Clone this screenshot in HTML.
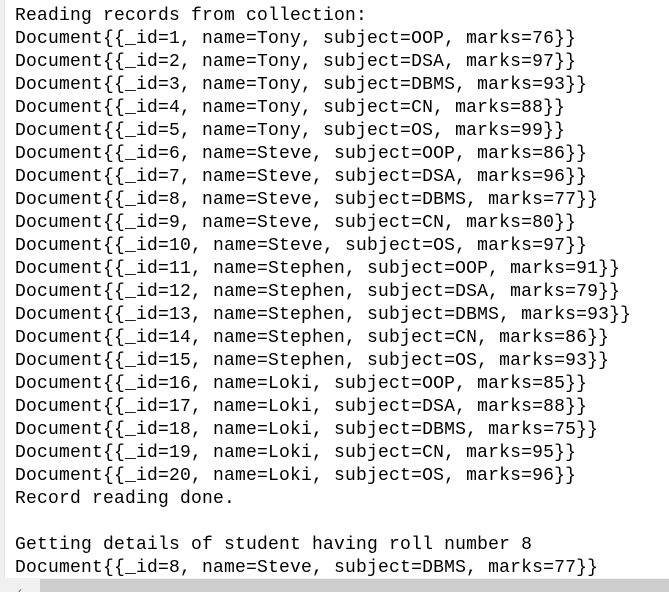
<!DOCTYPE html>
<html><head><style>
html,body{margin:0;padding:0;background:#fff;width:669px;height:592px;overflow:hidden;position:relative}
pre{position:absolute;left:15px;top:5px;margin:0;font-family:"Liberation Mono",monospace;font-size:18px;line-height:23px;color:#000;letter-spacing:0.2px}
.gut{position:absolute;left:0;top:0;width:4px;height:578px;background:#f0f0f0;border-right:1px solid #e4e4e4}
.sb{position:absolute;left:0;top:578px;width:669px;height:14px;background:#f0f0f0}
.th{position:absolute;left:40px;top:579px;width:629px;height:13px;background:#cdcdcd}
.ar{position:absolute;left:18px;top:584px;font:12px "Liberation Sans",sans-serif;color:#606060}
</style></head><body>
<div class="gut"></div>
<pre>Reading records from collection:
Document{{_id=1, name=Tony, subject=OOP, marks=76}}
Document{{_id=2, name=Tony, subject=DSA, marks=97}}
Document{{_id=3, name=Tony, subject=DBMS, marks=93}}
Document{{_id=4, name=Tony, subject=CN, marks=88}}
Document{{_id=5, name=Tony, subject=OS, marks=99}}
Document{{_id=6, name=Steve, subject=OOP, marks=86}}
Document{{_id=7, name=Steve, subject=DSA, marks=96}}
Document{{_id=8, name=Steve, subject=DBMS, marks=77}}
Document{{_id=9, name=Steve, subject=CN, marks=80}}
Document{{_id=10, name=Steve, subject=OS, marks=97}}
Document{{_id=11, name=Stephen, subject=OOP, marks=91}}
Document{{_id=12, name=Stephen, subject=DSA, marks=79}}
Document{{_id=13, name=Stephen, subject=DBMS, marks=93}}
Document{{_id=14, name=Stephen, subject=CN, marks=86}}
Document{{_id=15, name=Stephen, subject=OS, marks=93}}
Document{{_id=16, name=Loki, subject=OOP, marks=85}}
Document{{_id=17, name=Loki, subject=DSA, marks=88}}
Document{{_id=18, name=Loki, subject=DBMS, marks=75}}
Document{{_id=19, name=Loki, subject=CN, marks=95}}
Document{{_id=20, name=Loki, subject=OS, marks=96}}
Record reading done.

Getting details of student having roll number 8
Document{{_id=8, name=Steve, subject=DBMS, marks=77}}</pre>
<div class="sb"></div><div class="th"></div><div class="ar">&#x2039;</div>
</body></html>
